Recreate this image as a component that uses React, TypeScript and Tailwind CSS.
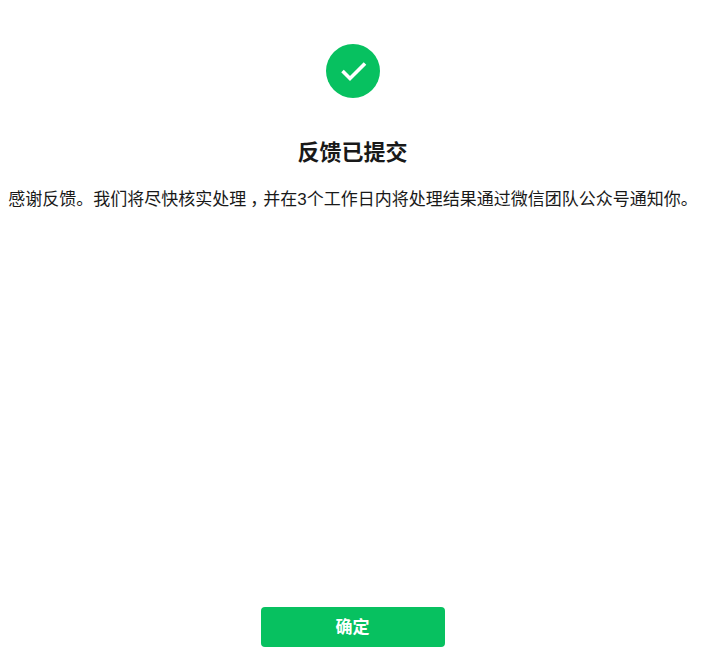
export default function App() {
  return (
    <div className="flex h-[668px] w-[705px] flex-col items-center bg-white font-['Liberation_Sans','Noto_Sans_CJK_SC',sans-serif] text-[#191919]">
      <div className="mt-[44px] flex h-[54px] w-[54px] items-center justify-center rounded-full bg-[#07c160]">
        <svg width="32" height="32" viewBox="0 0 32 32" fill="none">
          <path d="M5.5 16l7.5 7.5L28 8.5" stroke="#fff" strokeWidth="3.6" />
        </svg>
      </div>
      <h1 className="mt-[38px] text-[22px] leading-[34px] font-bold">反馈已提交</h1>
      <p className="mt-[16px] pl-[1px] text-[17px] leading-[28px] whitespace-nowrap">
        感谢反馈。我们将尽快核实处理
        <span className="pr-[4.5px] pl-[4px] [font-feature-settings:'halt']">，</span>
        并在3个工作日内将处理结果通过微信团队公众号通知你。
      </p>
      <button className="mt-auto mb-[21px] h-[40px] w-[184px] rounded bg-[#07c160] pt-[1px] text-[17px] font-bold text-white">
        确定
      </button>
    </div>
  );
}
